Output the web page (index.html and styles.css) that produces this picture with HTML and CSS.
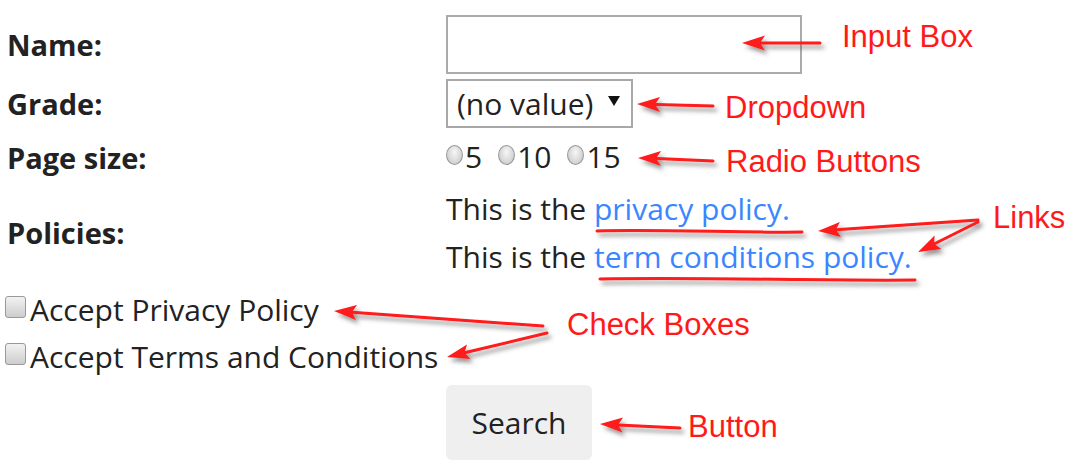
FILE: index.html
```html
<!DOCTYPE html>
<html lang="en">
<head>
<meta charset="utf-8">
<title>Search form</title>
<link rel="stylesheet" href="styles.css">
</head>
<body>
<div class="page">
  <form class="form">
    <label class="lbl">Name:</label>
    <div class="ctl"><input class="text-input" type="text"></div>

    <label class="lbl">Grade:</label>
    <div class="ctl">
      <div class="select"><span class="select-value">(no value)</span><span class="caret"></span></div>
    </div>

    <label class="lbl lbl-low">Page size:</label>
    <div class="ctl radios">
      <span class="radio"></span><span class="opt">5</span>
      <span class="radio"></span><span class="opt">10</span>
      <span class="radio"></span><span class="opt">15</span>
    </div>

    <label class="lbl">Policies:</label>
    <div class="ctl policies">
      <div class="pline">This is the <a class="link" href="#">privacy policy.</a></div>
      <div class="pline">This is the <a class="link" href="#">term conditions policy.</a></div>
    </div>

    <div class="checks">
      <div class="check-line"><span class="check"></span>Accept Privacy Policy</div>
      <div class="check-line"><span class="check"></span>Accept Terms and Conditions</div>
    </div>

    <div class="ctl btn-cell"><button class="btn" type="button">Search</button></div>
  </form>

  <div class="note note-input">Input Box</div>
  <div class="note note-dropdown">Dropdown</div>
  <div class="note note-radio">Radio Buttons</div>
  <div class="note note-links">Links</div>
  <div class="note note-checks">Check Boxes</div>
  <div class="note note-button">Button</div>

  <svg class="marks" width="1076" height="470" viewBox="0 0 1076 470" xmlns="http://www.w3.org/2000/svg">
    <defs>
      <filter id="sh" x="-20%" y="-50%" width="140%" height="200%">
        <feDropShadow dx="3" dy="4" stdDeviation="2" flood-color="#444" flood-opacity="0.55"/>
      </filter>
    </defs>
    <g filter="url(#sh)" fill="#ff1a1a" stroke="#ff1a1a" stroke-linecap="round">
      <!-- input box -->
      <line x1="820" y1="43" x2="760" y2="43" stroke-width="3"/>
      <polygon points="742,43 765,35.5 760,43 765,50.5" stroke="none"/>
      <!-- dropdown -->
      <line x1="713" y1="106" x2="656" y2="104.5" stroke-width="3"/>
      <polygon points="637,104 660,97 655,104.5 660,112" stroke="none"/>
      <!-- radio -->
      <line x1="713" y1="161" x2="657" y2="158.5" stroke-width="3"/>
      <polygon points="638,158 661,151 656,158.5 661,166" stroke="none"/>
      <!-- links -->
      <line x1="978" y1="220" x2="836" y2="229.8" stroke-width="3"/>
      <polygon points="818,231 839.9,222 835.9,229.8 840.9,237" stroke="none"/>
      <line x1="978" y1="222" x2="934" y2="244" stroke-width="3"/>
      <polygon points="918,252 934.6,235.4 934.1,244 941.4,248.9" stroke="none"/>
      <path d="M597 231 C 650 229 750 233 802 232" fill="none" stroke-width="3"/>
      <path d="M600 279 C 700 277 820 281 915 280" fill="none" stroke-width="3"/>
      <!-- check boxes -->
      <line x1="543" y1="326" x2="352" y2="312.3" stroke-width="3"/>
      <polygon points="334,311 357,305 351.9,312.3 356,320" stroke="none"/>
      <line x1="547" y1="333" x2="464.5" y2="352.8" stroke-width="3"/>
      <polygon points="447,357 467,344.5 464.5,352.8 470.5,359" stroke="none"/>
      <!-- button -->
      <line x1="680" y1="428" x2="618" y2="424.9" stroke-width="3"/>
      <polygon points="600,424 623,417.5 618,424.9 622.5,432.5" stroke="none"/>
    </g>
  </svg>
</div>
</body>
</html>
```
FILE: styles.css
```css
* { box-sizing: border-box; }

html, body {
  margin: 0;
  padding: 0;
  background: #ffffff;
}

.page {
  position: relative;
  width: 1076px;
  height: 470px;
  overflow: hidden;
  font-family: "Open Sans", "Noto Sans", sans-serif;
  font-size: 30px;
  color: #222222;
}

.form {
  display: grid;
  grid-template-columns: 439px auto;
  grid-template-rows: 59px 49px 47px 96px 94px 75px;
  row-gap: 5px;
  align-items: center;
  padding: 15px 0 0 7px;
  margin: 0;
}

.lbl {
  font-weight: 700;
  font-size: 29px;
  line-height: 40px;
}

.lbl-low { padding-top: 3px; }

.ctl {
  display: flex;
  align-items: center;
}

.text-input {
  width: 356px;
  height: 59px;
  border: 2px solid #ababab;
  border-radius: 0;
  background: #fff;
  outline: none;
  padding: 0 8px;
  font: inherit;
}

.select {
  width: 187px;
  height: 49px;
  border: 2px solid #a8a8a8;
  display: flex;
  align-items: center;
  padding-left: 9px;
  line-height: 40px;
  color: #222;
}

.caret {
  width: 0;
  height: 0;
  margin-left: auto;
  margin-right: 11px;
  margin-bottom: 6px;
  border-left: 6px solid transparent;
  border-right: 6px solid transparent;
  border-top: 10px solid #111;
}

.radios {
  line-height: 40px;
}

.radio {
  width: 17px;
  height: 20px;
  border-radius: 50%;
  border: 1px solid #999999;
  background: radial-gradient(ellipse at 50% 35%, #f6f6f6 0%, #dadada 55%, #bcbcbc 100%);
  margin-bottom: 4px;
  margin-right: 2px;
  flex: none;
}

.opt { margin-right: 16px; }

.policies {
  flex-direction: column;
  align-items: flex-start;
}

.pline {
  height: 48px;
  line-height: 48px;
  white-space: nowrap;
}

.link {
  color: #3a86ff;
  text-decoration: none;
}

.checks {
  grid-column: 1 / -1;
  display: flex;
  flex-direction: column;
}

.check-line {
  height: 47px;
  line-height: 47px;
  display: flex;
  align-items: center;
  white-space: nowrap;
}

.check {
  width: 21px;
  height: 22px;
  border: 1px solid #999999;
  border-radius: 3px;
  background: linear-gradient(#f2f2f2, #cdcdcd);
  margin-left: -2px;
  margin-right: 4px;
  margin-bottom: 6px;
  flex: none;
}

.btn-cell { grid-column: 2; }

.btn {
  width: 146px;
  height: 75px;
  border: none;
  border-radius: 6px;
  background: #efefef;
  font: inherit;
  color: #222;
  padding: 0;
}

.note {
  position: absolute;
  font-family: "Liberation Sans", Arial, sans-serif;
  font-size: 31px;
  line-height: 31px;
  color: #ff1a1a;
  white-space: nowrap;
}

.note-input { left: 842px; top: 21px; }
.note-dropdown { left: 725px; top: 92px; }
.note-radio { left: 726px; top: 146px; }
.note-links { left: 993px; top: 202px; }
.note-checks { left: 567px; top: 309px; }
.note-button { left: 688px; top: 411px; }

.marks {
  position: absolute;
  left: 0;
  top: 0;
  pointer-events: none;
}
```
